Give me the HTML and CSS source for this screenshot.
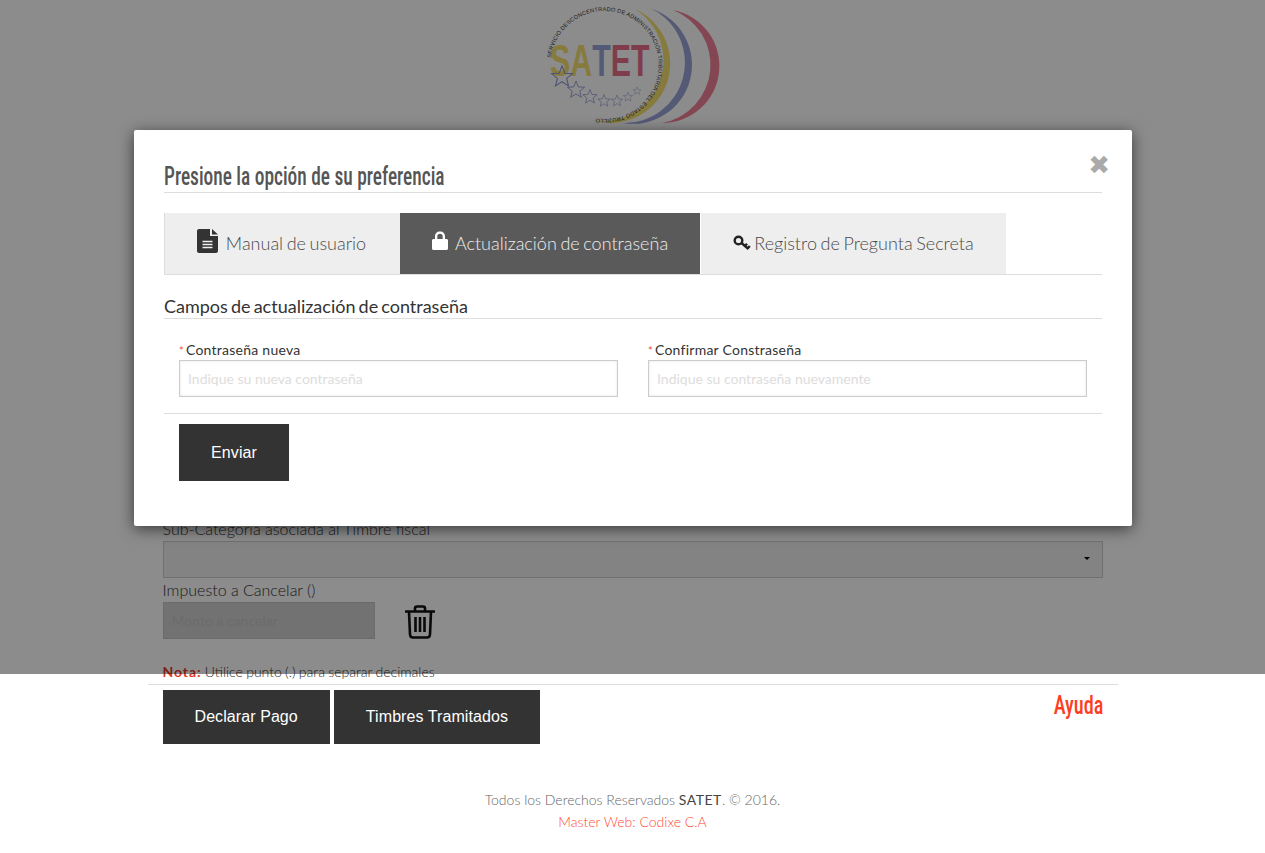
FILE: index.html
```html
<!DOCTYPE html>
<html lang="es">
<head>
  <meta charset="UTF-8" />
  <title>SATET</title>
  <link rel="stylesheet" href="styles.css">
</head>
<body>

<header class="logo-wrap">
  <svg class="logo" viewBox="0 0 190 125" width="190" height="125">
    <defs>
      <path id="logo-arc" d="M6,58 A54,54 0 1 1 45,117" />
      <polygon id="star" points="0,-10 2.6,-3.4 9.5,-3.1 4.2,1.3 5.9,8.1 0,4.3 -5.9,8.1 -4.2,1.3 -9.5,-3.1 -2.6,-3.4" />
    </defs>
    <path class="moon-red" d="M128,10 A57,57 0 0 1 117,123 A59,59 0 0 0 128,10 Z" />
    <path class="moon-blue" d="M107,9 A59,59 0 0 1 78,123 A60.3,60.3 0 0 0 107,9 Z" />
    <path class="moon-yellow" d="M90,9 A59.6,59.6 0 0 1 47,120 A60.6,60.6 0 0 0 90,9 Z" />
    <text class="logo-ring"><textPath href="#logo-arc">SERVICIO DESCONCENTRADO DE ADMINISTRACIÓN TRIBUTARIA DEL ESTADO TRUJILLO</textPath></text>
    <text class="logo-name" transform="translate(5,76) scale(.69,1)"><tspan class="sa">SA</tspan><tspan class="t">T</tspan><tspan class="et">ET</tspan></text>
    <g class="stars">
      <use href="#star" transform="translate(17,77) scale(1.1)" />
      <use href="#star" transform="translate(31,90) scale(.9)" />
      <use href="#star" transform="translate(45,97) scale(.75)" />
      <use href="#star" transform="translate(59,101) scale(.65)" />
      <use href="#star" transform="translate(72,101) scale(.6)" />
      <use href="#star" transform="translate(83,97) scale(.5)" />
      <use href="#star" transform="translate(92,91) scale(.42)" />
    </g>
  </svg>
</header>

<main class="container">
  <div class="field">
    <label>Sub-Categoría asociada al Timbre fiscal</label>
    <div class="select-box"><span class="caret"></span></div>
  </div>
  <div class="field">
    <label>Impuesto a Cancelar ()</label>
    <div class="amount-row">
      <input type="text" class="amount" placeholder="Monto a cancelar" disabled />
      <svg class="trash" viewBox="0 0 30 34" width="30" height="34">
        <path d="M1 6.5H29M10 6V3.5C10 2.4 10.9 1.5 12 1.5H18C19.1 1.5 20 2.4 20 3.5V6M4 6.5L5 29.5C5.1 31.4 6.4 32.5 8 32.5H22C23.6 32.5 24.9 31.4 25 29.5L26 6.5" />
        <path class="bars" d="M10.5 12V27M15 12V27M19.5 12V27" />
      </svg>
    </div>
  </div>
  <p class="note"><b>Nota:</b> Utilice punto (.) para separar decimales</p>

  <div class="actions">
    <div class="action-btns">
      <button type="button" class="btn">Declarar Pago</button>
      <button type="button" class="btn">Timbres Tramitados</button>
    </div>
    <a class="help" href="#"><span class="narrow narrow-right">Ayuda</span></a>
  </div>
</main>

<footer>
  <p>Todos los Derechos Reservados <span class="brand">SATET</span>. © 2016.</p>
  <p class="credit">Master Web: Codixe C.A</p>
</footer>

<div class="overlay"></div>

<section class="modal">
  <button type="button" class="close">&#10006;</button>
  <h2 class="modal-title"><span class="narrow">Presione la opción de su preferencia</span></h2>

  <nav class="tabs">
    <a class="tab tab-manual" href="#">
      <svg class="tab-icon" viewBox="0 0 21 24" width="21" height="24">
        <path class="ico-fill" d="M2 0H13V7H21V22C21 23.1 20.1 24 19 24H2C.9 24 0 23.1 0 22V2C0 .9.9 0 2 0ZM15 0L21 5.5H15Z" />
        <path class="ico-lines" d="M5.5 12.5H15.5M5.5 15.5H15.5M5.5 18.5H15.5" />
      </svg>
      Manual de usuario
    </a>
    <a class="tab tab-pass active" href="#">
      <svg class="tab-icon" viewBox="0 0 16 19" width="16" height="19">
        <path class="ico-white" d="M3 8V5.5C3 2.5 5 .5 8 .5S13 2.5 13 5.5V8H14.5C15.3 8 16 8.7 16 9.5V17.5C16 18.3 15.3 19 14.5 19H1.500C.7 19 0 18.3 0 17.500V9.5C0 8.7.7 8 1.500 8ZM5.300 8H10.700V5.500C10.700 3.800 9.700 2.800 8 2.800S5.300 3.800 5.300 5.500Z" />
      </svg>
      Actualización de contraseña
    </a>
    <a class="tab tab-key" href="#">
      <svg class="tab-icon" viewBox="0 0 18 16" width="18" height="16">
        <circle class="key-ring" cx="5.500" cy="5.500" r="3.800" />
        <path class="key-stem" d="M8.500 8L15.500 14M12 11L14 8.800M14.800 13.200L16.800 11" />
      </svg>
      Registro de Pregunta Secreta
    </a>
  </nav>

  <h3 class="section-title">Campos de actualización de contraseña</h3>

  <div class="form-grid">
    <div class="form-col">
      <label><span class="req">*</span>Contraseña nueva</label>
      <input type="password" class="text-input" placeholder="Indique su nueva contraseña" />
    </div>
    <div class="form-col">
      <label><span class="req">*</span>Confirmar Constraseña</label>
      <input type="password" class="text-input" placeholder="Indique su contraseña nuevamente" />
    </div>
  </div>

  <div class="modal-foot">
    <button type="button" class="btn btn-send">Enviar</button>
  </div>
</section>

</body>
</html>
```

FILE: styles.css
```css
body {
  margin: 0;
  font-family: 'Lato', sans-serif;
  background-color: #fff;
  color: #333;
  height: 853px;
  overflow: hidden;
}
.logo-wrap {
  height: 125px;
  display: flex;
  justify-content: center;
}
.logo {
  display: block;
  margin-left: 15px;
}
.moon-red { fill: #f08095; }
.moon-blue { fill: #9aa3d8; }
.moon-yellow { fill: #f5e070; }
.logo-ring {
  font-family: 'Liberation Sans', sans-serif;
  font-size: 5.6px;
  letter-spacing: .2px;
  fill: #333;
}
.logo-name {
  font-family: 'Liberation Sans', sans-serif;
  font-weight: bold;
  font-size: 44px;
}
.logo-name .sa { fill: #f5e070; }
.logo-name .t { fill: #9aa3d8; }
.logo-name .et { fill: #e8708a; }
.stars use {
  fill: none;
  stroke: #8f98d0;
  stroke-width: 1;
}

.container {
  width: 940px;
  margin: 0 auto;
  padding: 394px 15px 0;
}
.field label {
  display: block;
  font-weight: 300;
  font-size: 16px;
  line-height: 20px;
}
.select-box {
  position: relative;
  height: 35px;
  border: 1px solid #ccc;
  background-color: #eee;
  margin: 2px 0 2px;
}
.caret {
  position: absolute;
  right: 12px;
  top: 15px;
  border-top: 3px solid #000;
  border-left: 3px solid transparent;
  border-right: 3px solid transparent;
}
.amount-row {
  display: flex;
  align-items: center;
  gap: 30px;
  margin-top: 2px;
}
.amount {
  box-sizing: border-box;
  width: 212px;
  height: 37px;
  padding: 0 8px;
  border: 1px solid #c4c4c4;
  background-color: #d0d0d0;
  font-family: 'Lato', sans-serif;
  font-size: 14px;
}
.amount::placeholder { color: #c4c4c4; }
.trash { margin-top: 2px; }
.trash path {
  fill: none;
  stroke: #111;
  stroke-width: 2.6;
  stroke-linecap: round;
  stroke-linejoin: round;
}
.trash .bars { stroke-linecap: butt; }
.note {
  margin: 24px 0 0;
  font-size: 14px;
  font-weight: 300;
  word-spacing: -.5px;
  line-height: 18px;
}
.note b {
  color: #e23a2a;
  font-weight: 700;
  letter-spacing: .9px;
}

.actions {
  display: flex;
  justify-content: space-between;
  align-items: flex-start;
  margin: 3px -15px 0;
  padding: 5px 15px 0;
  border-top: 1px solid #ddd;
}
.action-btns {
  display: flex;
  gap: 4px;
}
.btn {
  background-color: #333;
  color: #fff;
  border: none;
  font-family: 'Liberation Sans', sans-serif;
  font-size: 16px;
  letter-spacing: .08px;
  height: 54px;
  padding: 0 32px;
}
/* Roboto al 75% sigue siendo mas ancha que la fuente del titulo */
.narrow {
  display: inline-block;
  white-space: nowrap;
  transform: scaleX(.775);
  transform-origin: left center;
}
.narrow-right {
  transform: scaleX(.81);
  transform-origin: right center;
}
.help {
  font-family: 'Roboto', sans-serif;
  font-stretch: 75%;
  font-size: 25px;
  font-weight: 500;
  color: #ff3d1f;
  text-decoration: none;
  line-height: 30px;
  padding-top: 1px;
  margin-right: -1px;
}
footer {
  margin-top: 45px;
  text-align: center;
  font-size: 14px;
  font-weight: 300;
  color: #666;
}
footer p {
  margin: 0;
  line-height: 22px;
}
.brand { font-weight: 400; color: #444; letter-spacing: .5px; }
.credit { color: #ff4a33; }

.overlay {
  position: absolute;
  top: 0;
  left: 0;
  right: 0;
  height: 674px;
  background-color: rgba(0, 0, 0, .45);
}
.modal {
  position: absolute;
  top: 130px;
  left: 134px;
  box-sizing: border-box;
  width: 998px;
  height: 396px;
  padding: 30px;
  background-color: #fff;
  border-radius: 2px;
  box-shadow: 0 3px 15px rgba(0, 0, 0, .6);
}
.close {
  position: absolute;
  top: 21px;
  right: 22px;
  padding: 0;
  border: none;
  background: none;
  color: #aaa;
  font-size: 26px;
  line-height: 28px;
  font-family: 'DejaVu Sans', sans-serif;
}
.modal-title {
  margin: 0;
  height: 32px;
  border-bottom: 1px solid #ddd;
  font-family: 'Roboto', sans-serif;
  font-stretch: 75%;
  font-size: 25px;
  font-weight: 500;
  line-height: 34px;
  color: #555;
}
.tabs {
  display: flex;
  margin-top: 20px;
  height: 61px;
  border-bottom: 1px solid #ddd;
}
.tab {
  display: flex;
  align-items: center;
  justify-content: center;
  gap: 8px;
  box-sizing: border-box;
  padding-bottom: 2px;
  background-color: #eee;
  color: #4a4a4a;
  font-size: 18px;
  font-weight: 300;
  word-spacing: -1.3px;
  text-decoration: none;
}
.tab-manual { width: 236px; border-left: 1px solid #ddd; padding-right: 2px; }
.tab-pass { width: 300px; gap: 7px; }
.tab-key { width: 305px; margin-left: 1px; gap: 3px; }
.tab.active {
  background-color: #5a5a5a;
  color: #eee;
}
.tab-icon { margin-top: -5px; }
.tab-manual .tab-icon { margin-top: -3px; }
.ico-fill { fill: #333; }
.ico-lines { fill: none; stroke: #eee; stroke-width: 1.4; }
.ico-white { fill: #fff; fill-rule: evenodd; }
.key-ring, .key-stem {
  fill: none;
  stroke: #222;
  stroke-width: 2.4;
}
.tab-key .tab-icon { margin-top: 0; }
.section-title {
  margin: 21px 0 0;
  height: 22px;
  border-bottom: 1px solid #ddd;
  font-size: 18px;
  font-weight: 400;
  word-spacing: -1.5px;
  line-height: 20px;
  color: #333;
}
.form-grid {
  display: grid;
  grid-template-columns: 1fr 1fr;
  gap: 30px;
  padding: 21px 15px 16px;
  border-bottom: 1px solid #ddd;
}
.form-col label {
  display: block;
  font-size: 14px;
  letter-spacing: .25px;
  line-height: 19px;
  color: #333;
}
.req { color: #ff4a33; font-size: 11px; margin-right: 2px; }
.text-input {
  display: block;
  box-sizing: border-box;
  width: 100%;
  height: 37px;
  padding: 0 8px;
  border: 1px solid #ccc;
  box-shadow: inset 0 0 3px rgba(0, 0, 0, .1);
  font-family: 'Lato', sans-serif;
  font-size: 14px;
}
.text-input::placeholder { color: #ddd; }
.modal-foot { padding: 10px 15px 0; }
.btn-send { width: 110px; height: 57px; padding: 0; }
```
